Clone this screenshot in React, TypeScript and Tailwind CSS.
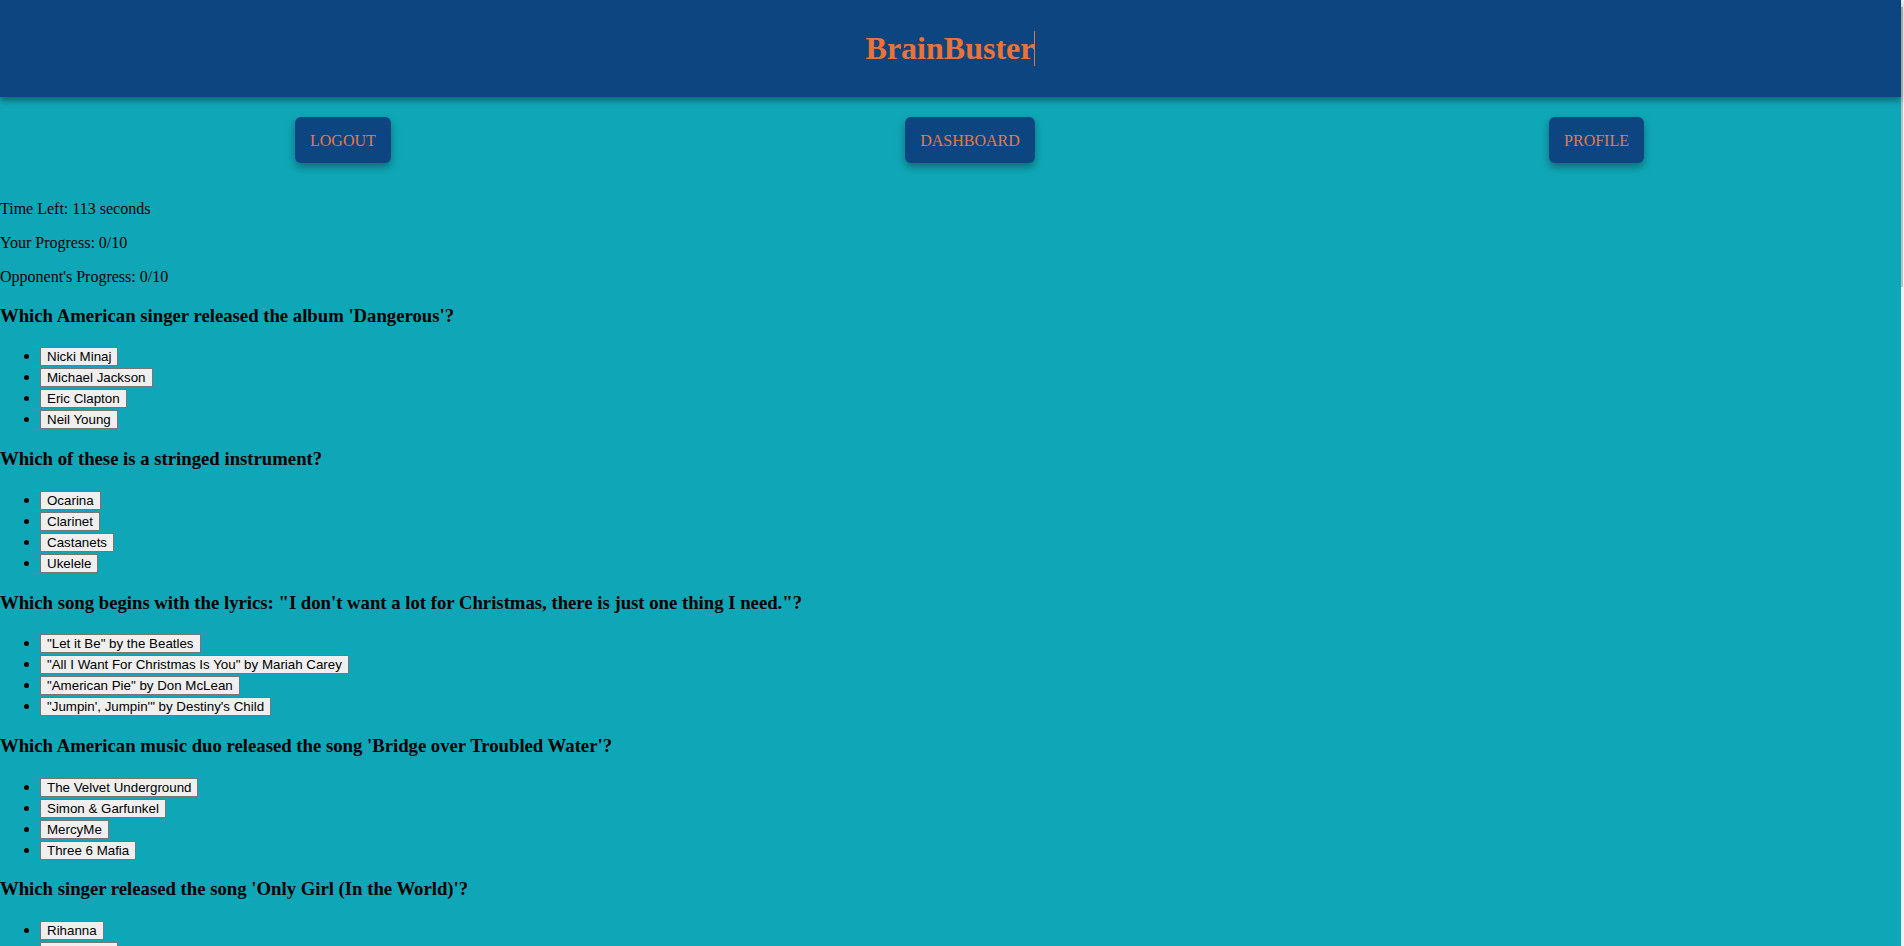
import React from 'react';

interface Question {
  text: string;
  options: string[];
}

const questions: Question[] = [
  {
    text: "Which American singer released the album 'Dangerous'?",
    options: ['Nicki Minaj', 'Michael Jackson', 'Eric Clapton', 'Neil Young'],
  },
  {
    text: 'Which of these is a stringed instrument?',
    options: ['Ocarina', 'Clarinet', 'Castanets', 'Ukelele'],
  },
  {
    text: 'Which song begins with the lyrics: "I don\'t want a lot for Christmas, there is just one thing I need."?',
    options: [
      '"Let it Be" by the Beatles',
      '"All I Want For Christmas Is You" by Mariah Carey',
      '"American Pie" by Don McLean',
      '"Jumpin\', Jumpin\'" by Destiny\'s Child',
    ],
  },
  {
    text: "Which American music duo released the song 'Bridge over Troubled Water'?",
    options: ['The Velvet Underground', 'Simon & Garfunkel', 'MercyMe', 'Three 6 Mafia'],
  },
  {
    text: "Which singer released the song 'Only Girl (In the World)'?",
    options: ['Rihanna', 'Nicki Minaj', 'Katy Perry', 'Lady Gaga'],
  },
];

function NavButton({ label }: { label: string }) {
  return (
    <button className="bg-[#0c4580] text-[#e47a4e] text-[16px] leading-[18px] px-[15px] pt-[15px] pb-[13px] rounded-md shadow-[0_4px_8px_rgba(0,0,0,0.35)] font-['Liberation_Serif',serif]">
      {label}
    </button>
  );
}

export default function App() {
  return (
    <div className="h-screen overflow-hidden flex bg-[#0fa7b7] font-['Liberation_Serif',serif] text-black leading-[normal]">
      <div className="flex-1 flex flex-col">
        {/* header */}
        <header className="shrink-0 h-[97px] bg-[#0c4580] flex items-center justify-center shadow-[0_4px_6px_rgba(0,0,0,0.35)] relative z-10">
          <h1 className="text-[32px] leading-[35px] font-bold text-[#e8743b] border-r border-[#e8743b]">
            BrainBuster
          </h1>
        </header>

        <nav className="shrink-0 flex justify-between items-center pl-[295px] pr-[257px] pt-[20px] pb-[21px]">
          <NavButton label="LOGOUT" />
          <NavButton label="DASHBOARD" />
          <NavButton label="PROFILE" />
        </nav>

        <main className="shrink-0 text-[16px]">
          <p className="my-4">Time Left: 113 seconds</p>
          <p className="my-4">Your Progress: 0/10</p>
          <p className="my-4">Opponent's Progress: 0/10</p>

          {questions.map((q) => (
            <div key={q.text}>
              <h3 className="text-[18.72px] font-bold my-[18.72px]">{q.text}</h3>
              <ul className="list-disc pl-10 my-4">
                {q.options.map((o) => (
                  <li key={o} className="h-[21px] leading-[21px]">
                    <button className="bg-[#efefef] border border-[#767676] px-[6px] py-[1px] text-[13.333px] leading-[normal] text-black font-['Liberation_Sans',Arial,sans-serif]">
                      {o}
                    </button>
                  </li>
                ))}
              </ul>
            </div>
          ))}
        </main>
      </div>

      {/* scrollbar strip */}
      <div className="w-[3px] bg-[#f1f1f1] flex flex-col pt-[7px]">
        <div className="h-[280px] w-[2px] bg-[#c1c1c1]" />
      </div>
    </div>
  );
}
